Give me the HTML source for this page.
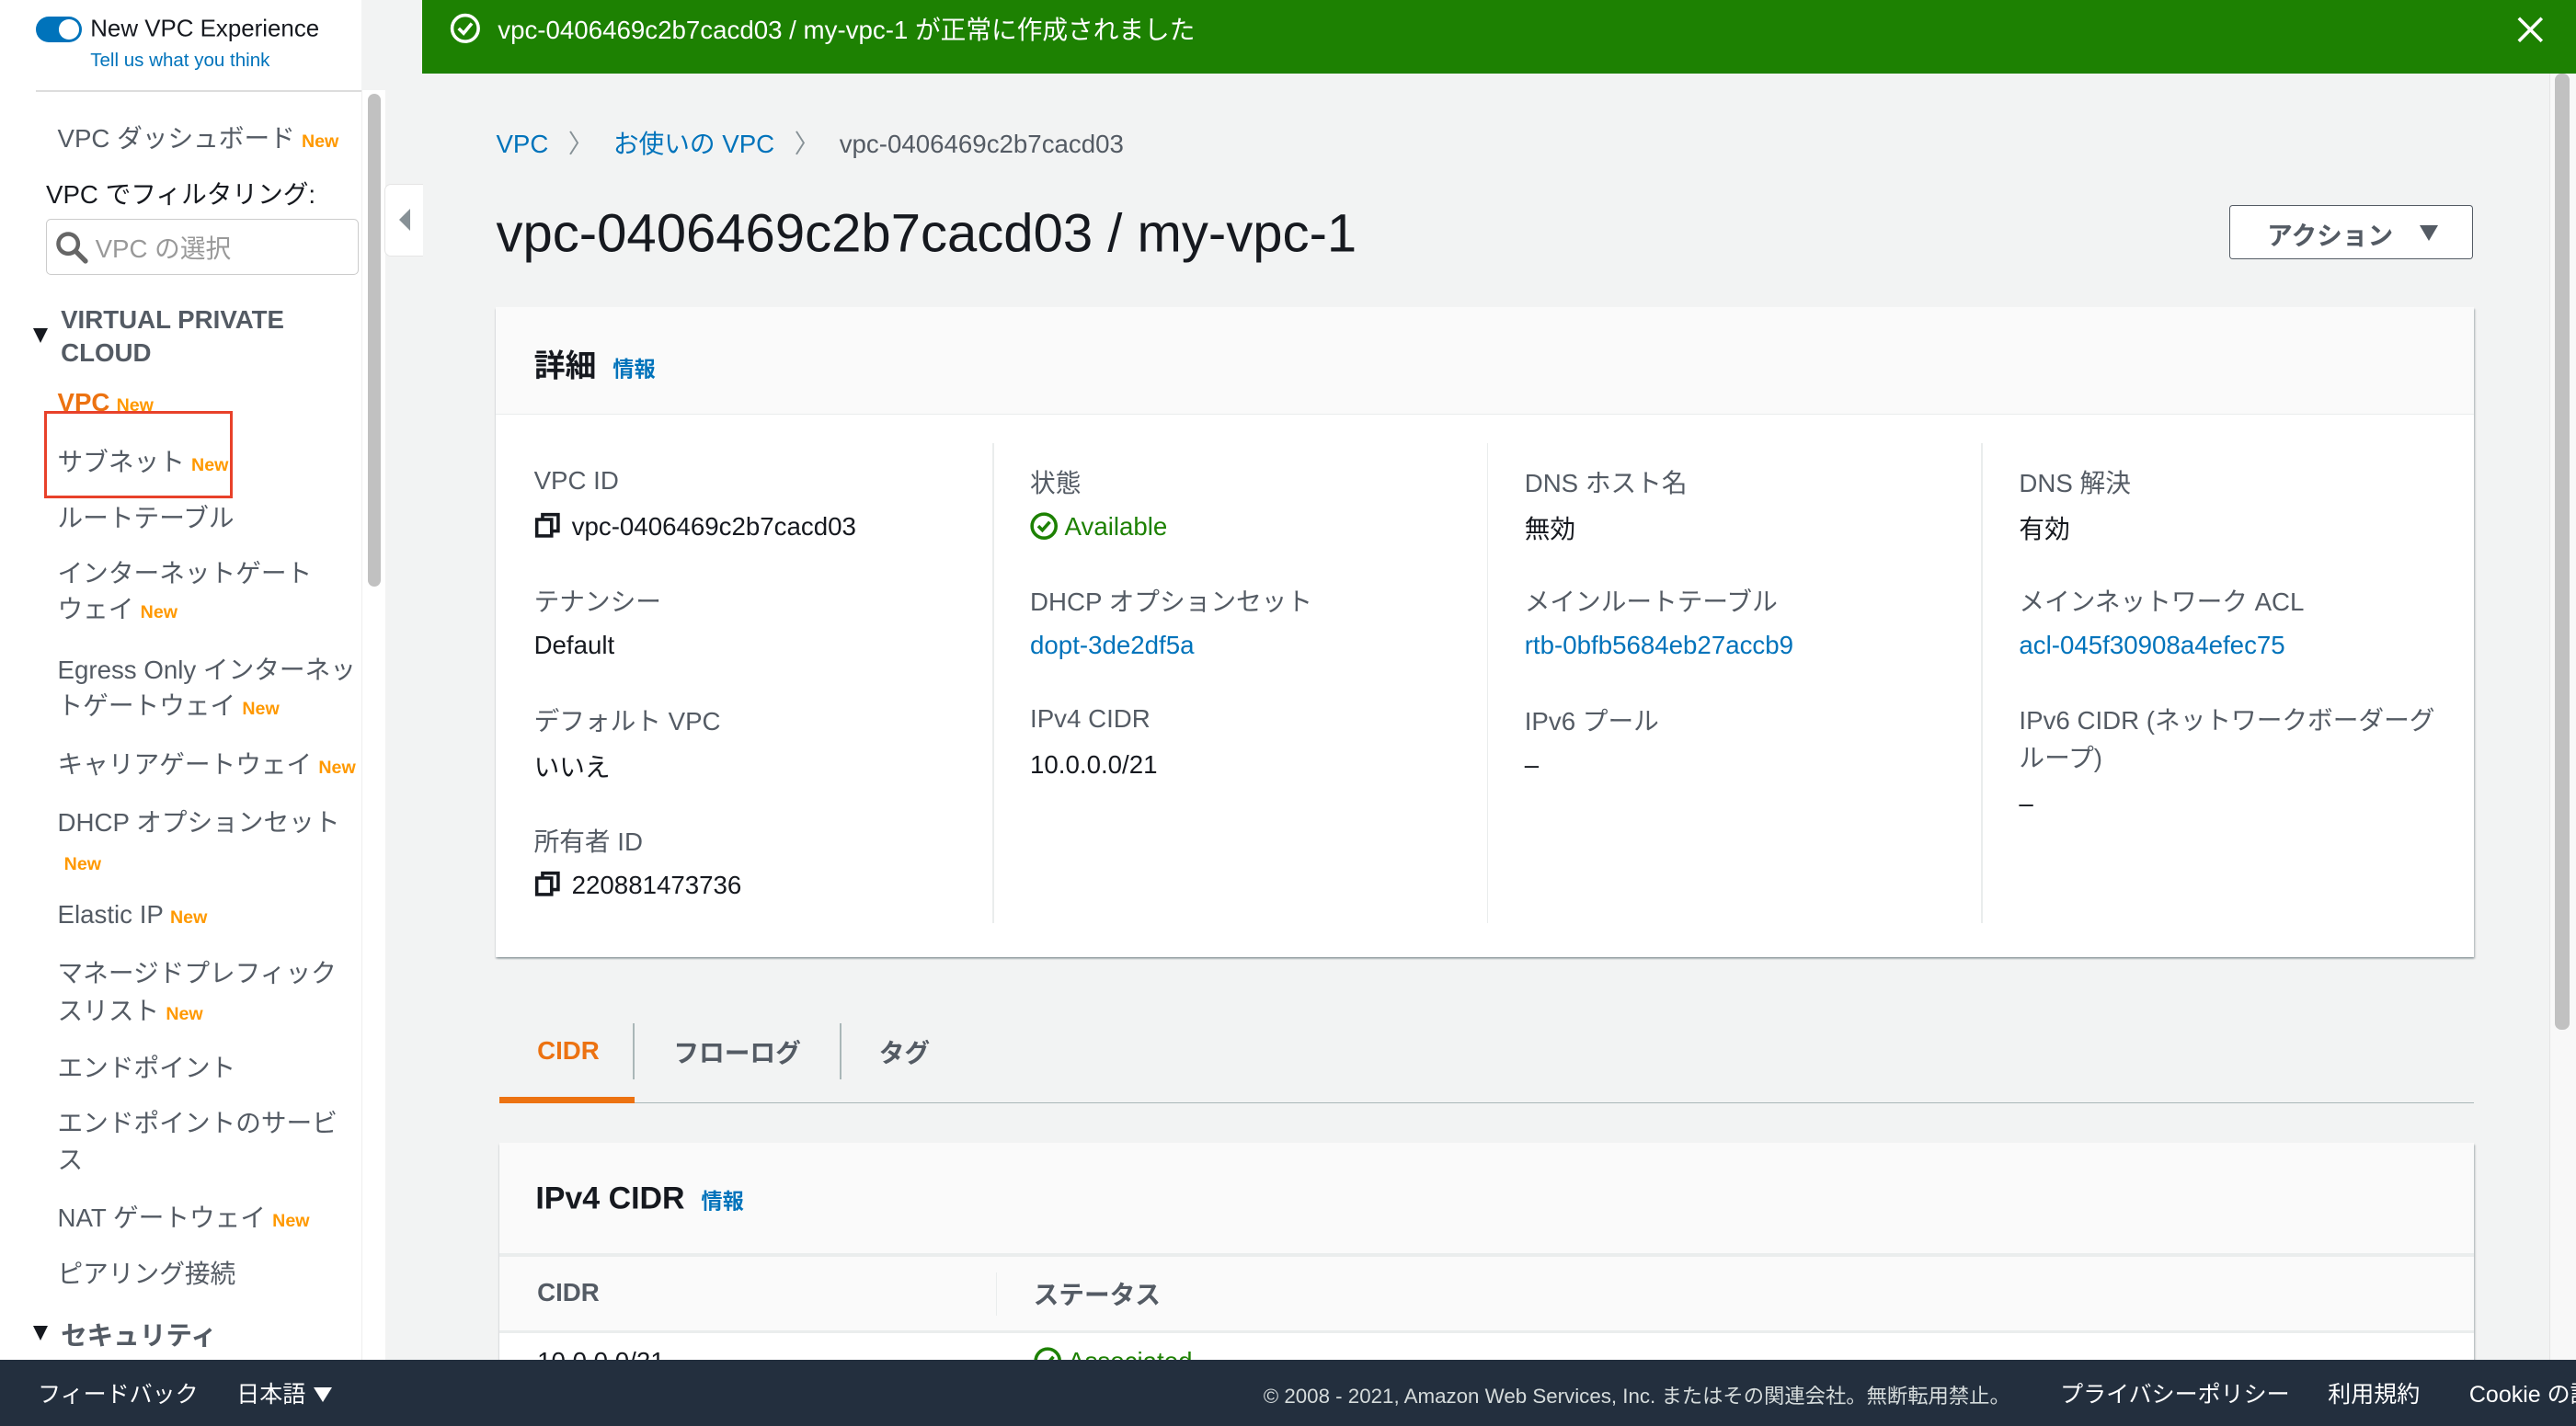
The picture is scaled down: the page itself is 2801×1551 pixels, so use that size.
<!DOCTYPE html>
<html><head><meta charset="utf-8">
<style>
html,body{margin:0;padding:0;width:2801px;height:1551px;overflow:hidden;background:#f2f3f3}
#r{zoom:1.78635;position:relative;width:1568px;height:868px;font-family:"Liberation Sans","Noto Sans CJK JP",sans-serif;color:#16191f}
.a{position:absolute;white-space:nowrap}
.c{transform:translateY(-50%)}
.nav{font-size:15.5px;color:#545b64}
.new{font-size:11px;color:#ff9900;font-weight:bold;margin-left:4px}
.lbl{font-size:15.5px;color:#545b64}
.val{font-size:15.5px;color:#16191f}
.lnk{color:#0073bb}
.div{position:absolute;width:1px;background:#eaeded;top:270px;height:292px}
</style></head><body><div id="r">
<div class="a" style="left:0;top:0;width:220px;height:828px;background:#fff"></div>
<div class="a" style="left:22px;top:55px;width:198px;height:1px;background:#ddd"></div>
<div class="a" style="left:22px;top:10px;width:28px;height:16px;border-radius:8px;background:#0073bb"></div>
<div class="a" style="left:36px;top:12px;width:12px;height:12px;border-radius:6px;background:#fff"></div>
<div class="a c" style="left:55px;top:18px;font-size:14.5px;color:#16191f">New VPC Experience</div>
<div class="a c" style="left:55px;top:37px;font-size:11.5px;color:#0073bb">Tell us what you think</div>
<div class="a" style="left:220px;top:55px;width:14px;height:773px;background:#fff;border-left:1px solid #eee"></div>
<div class="a" style="left:224px;top:57px;width:8px;height:300px;border-radius:4px;background:#c1c1c1"></div>
<div class="a" style="left:234px;top:112px;width:23px;height:43px;background:#fff;border:1px solid #e5e5e5;border-right:none;border-radius:4px 0 0 4px"></div>
<div class="a" style="left:243px;top:127px;width:0;height:0;border-top:7px solid transparent;border-bottom:7px solid transparent;border-right:7px solid #879196"></div>

<div class="a c nav" style="left:35px;top:83px">VPC ダッシュボード<span class="new">New</span></div>
<div class="a c" style="left:28px;top:117px;font-size:15.5px;color:#16191f">VPC でフィルタリング:</div>
<div class="a" style="left:28px;top:133px;width:189px;height:33px;border:1px solid #ccc;border-radius:3px;background:#fff"></div>
<svg class="a" style="left:33px;top:140px" width="22" height="22" viewBox="0 0 22 22"><circle cx="8.5" cy="8.5" r="6" fill="none" stroke="#666" stroke-width="2.5"/><path d="M13 13l6 6" stroke="#666" stroke-width="3" stroke-linecap="round"/></svg>
<div class="a c" style="left:58px;top:150px;font-size:15.5px;color:#999">VPC の選択</div>
<div class="a" style="left:20px;top:200px;width:0;height:0;border-left:5px solid transparent;border-right:5px solid transparent;border-top:9px solid #16191f"></div>
<div class="a" style="left:37px;top:185px;font-size:15.5px;font-weight:bold;color:#545b64;line-height:20px">VIRTUAL PRIVATE<br>CLOUD</div>
<div class="a c" style="left:35px;top:245px;font-size:15.5px;font-weight:bold;color:#ec7211">VPC<span class="new">New</span></div>
<div class="a" style="left:27px;top:250px;width:111px;height:50px;border:2px solid #e8412a;background:#fff"></div>
<div class="a c nav" style="left:35px;top:280px">サブネット<span class="new">New</span></div>
<div class="a c nav" style="left:35px;top:314px">ルートテーブル</div>
<div class="a nav" style="left:35px;top:338px;line-height:22px">インターネットゲート<br>ウェイ<span class="new">New</span></div>
<div class="a nav" style="left:35px;top:397px;line-height:22px">Egress Only インターネッ<br>トゲートウェイ<span class="new">New</span></div>
<div class="a c nav" style="left:35px;top:464px">キャリアゲートウェイ<span class="new">New</span></div>
<div class="a nav" style="left:35px;top:489px;line-height:24px">DHCP オプションセット<br><span class="new" style="margin-left:4px">New</span></div>
<div class="a c nav" style="left:35px;top:557px">Elastic IP<span class="new">New</span></div>
<div class="a nav" style="left:35px;top:581px;line-height:23px">マネージドプレフィック<br>スリスト<span class="new">New</span></div>
<div class="a c nav" style="left:35px;top:649px">エンドポイント</div>
<div class="a nav" style="left:35px;top:673px;line-height:22px">エンドポイントのサービ<br>ス</div>
<div class="a c nav" style="left:35px;top:740px">NAT ゲートウェイ<span class="new">New</span></div>
<div class="a c nav" style="left:35px;top:774px">ピアリング接続</div>
<div class="a" style="left:20px;top:807px;width:0;height:0;border-left:5px solid transparent;border-right:5px solid transparent;border-top:9px solid #16191f"></div>
<div class="a c" style="left:37px;top:812px;font-size:16px;font-weight:bold;color:#545b64">セキュリティ</div>

<div class="a" style="left:257px;top:0;width:1311px;height:45px;background:#1d8102"></div>
<svg class="a" style="left:273px;top:7px" width="20" height="20" viewBox="0 0 20 20"><circle cx="10" cy="10" r="8" fill="none" stroke="#fff" stroke-width="2"/><path d="M6 10l3 3 5-6" fill="none" stroke="#fff" stroke-width="2"/></svg>
<div class="a c" style="left:303px;top:17px;font-size:15.5px;color:#fff">vpc-0406469c2b7cacd03 / my-vpc-1 が正常に作成されました</div>
<svg class="a" style="left:1532px;top:10px" width="16" height="16" viewBox="0 0 16 16"><path d="M1 1l14 14M15 1L1 15" stroke="#fff" stroke-width="2"/></svg>
<div class="a" style="left:1552px;top:45px;width:16px;height:783px;background:#f8f8f8;border-left:1px solid #e5e5e5"></div>
<div class="a" style="left:1555px;top:45px;width:9px;height:582px;background:#c1c1c1;border-radius:4px"></div>

<div class="a c" style="left:302px;top:86px;font-size:15.5px"><span class="lnk">VPC</span><span style="color:#879196;margin:0 12px">〉</span><span class="lnk">お使いの VPC</span><span style="color:#879196;margin:0 12px">〉</span><span style="color:#545b64">vpc-0406469c2b7cacd03</span></div>
<div class="a c" style="left:302px;top:142px;font-size:32.5px;color:#16191f">vpc-0406469c2b7cacd03 / my-vpc-1</div>
<div class="a" style="left:1357px;top:125px;width:147px;height:32px;border:1px solid #545b64;border-radius:2px;background:#fff"></div>
<div class="a c" style="left:1380px;top:142px;font-size:15.5px;font-weight:bold;color:#545b64">アクション</div>
<div class="a" style="left:1473px;top:137px;width:0;height:0;border-left:6px solid transparent;border-right:6px solid transparent;border-top:10px solid #545b64"></div>

<div class="a" style="left:302px;top:187px;width:1204px;height:396px;background:#fff;box-shadow:0 1px 1px rgba(0,28,36,.3),1px 1px 1px rgba(0,28,36,.15)"></div>
<div class="a" style="left:302px;top:187px;width:1204px;height:65px;background:#fafafa;border-bottom:1px solid #eaeded"></div>
<div class="a c" style="left:325px;top:221px;font-size:19px;font-weight:bold">詳細<span style="font-size:13px;color:#0073bb;margin-left:10px">情報</span></div>
<div class="div" style="left:604px"></div><div class="div" style="left:905px"></div><div class="div" style="left:1206px"></div>
<svg width="0" height="0" style="position:absolute"><defs><symbol id="cp" viewBox="0 0 16 16"><rect x="1.5" y="4.5" width="9" height="10" fill="none" stroke="#16191f" stroke-width="2"/><path d="M5 4V1.5h9.5v10H11" fill="none" stroke="#16191f" stroke-width="2"/></symbol></defs></svg>

<div class="a c lbl" style="left:325px;top:293px">VPC ID</div>
<div class="a c val" style="left:325px;top:321px"><svg width="16" height="16" style="vertical-align:-2px;margin-right:7px"><use href="#cp"/></svg>vpc-0406469c2b7cacd03</div>
<div class="a c lbl" style="left:325px;top:365px">テナンシー</div>
<div class="a c val" style="left:325px;top:393px">Default</div>
<div class="a c lbl" style="left:325px;top:438px">デフォルト VPC</div>
<div class="a c val" style="left:325px;top:466px">いいえ</div>
<div class="a c lbl" style="left:325px;top:511px">所有者 ID</div>
<div class="a c val" style="left:325px;top:539px"><svg width="16" height="16" style="vertical-align:-2px;margin-right:7px"><use href="#cp"/></svg>220881473736</div>

<div class="a c lbl" style="left:627px;top:293px">状態</div>
<div class="a c val" style="left:627px;top:321px;color:#1d8102"><svg width="17" height="17" viewBox="0 0 17 17" style="vertical-align:-3px;margin-right:4px"><circle cx="8.5" cy="8.5" r="7.3" fill="none" stroke="#1d8102" stroke-width="2"/><path d="M5 8.5l2.5 2.5 4.5-5" fill="none" stroke="#1d8102" stroke-width="2"/></svg>Available</div>
<div class="a c lbl" style="left:627px;top:365px">DHCP オプションセット</div>
<div class="a c val lnk" style="left:627px;top:393px">dopt-3de2df5a</div>
<div class="a c lbl" style="left:627px;top:438px">IPv4 CIDR</div>
<div class="a c val" style="left:627px;top:466px">10.0.0.0/21</div>

<div class="a c lbl" style="left:928px;top:293px">DNS ホスト名</div>
<div class="a c val" style="left:928px;top:321px">無効</div>
<div class="a c lbl" style="left:928px;top:365px">メインルートテーブル</div>
<div class="a c val lnk" style="left:928px;top:393px">rtb-0bfb5684eb27accb9</div>
<div class="a c lbl" style="left:928px;top:438px">IPv6 プール</div>
<div class="a c val" style="left:928px;top:466px">–</div>

<div class="a c lbl" style="left:1229px;top:293px">DNS 解決</div>
<div class="a c val" style="left:1229px;top:321px">有効</div>
<div class="a c lbl" style="left:1229px;top:365px">メインネットワーク ACL</div>
<div class="a c val lnk" style="left:1229px;top:393px">acl-045f30908a4efec75</div>
<div class="a lbl" style="left:1229px;top:427px;line-height:23px">IPv6 CIDR (ネットワークボーダーグ<br>ループ)</div>
<div class="a c val" style="left:1229px;top:489px">–</div>

<div class="a" style="left:304px;top:671px;width:1202px;height:1px;background:#aab7b8"></div>
<div class="a" style="left:304px;top:668px;width:82px;height:4px;background:#ec7211"></div>
<div class="a c" style="left:327px;top:640px;font-size:15.5px;font-weight:bold;color:#ec7211">CIDR</div>
<div class="a" style="left:385px;top:623px;width:1px;height:34px;background:#aab7b8"></div>
<div class="a c" style="left:410px;top:640px;font-size:15.5px;font-weight:bold;color:#545b64">フローログ</div>
<div class="a" style="left:511px;top:623px;width:1px;height:34px;background:#aab7b8"></div>
<div class="a c" style="left:535px;top:640px;font-size:15.5px;font-weight:bold;color:#545b64">タグ</div>

<div class="a" style="left:304px;top:696px;width:1202px;height:140px;background:#fafafa;box-shadow:0 1px 1px rgba(0,28,36,.3),1px 1px 1px rgba(0,28,36,.15)"></div>
<div class="a c" style="left:326px;top:730px;font-size:19px;font-weight:bold">IPv4 CIDR<span style="font-size:13px;color:#0073bb;margin-left:10px">情報</span></div>
<div class="a" style="left:304px;top:763px;width:1202px;height:2px;background:#eaeded"></div>
<div class="a" style="left:606px;top:775px;width:1px;height:26px;background:#eaeded"></div>
<div class="a c" style="left:327px;top:787px;font-size:15.5px;font-weight:bold;color:#545b64">CIDR</div>
<div class="a c" style="left:629px;top:787px;font-size:15.5px;font-weight:bold;color:#545b64">ステータス</div>
<div class="a" style="left:304px;top:810px;width:1202px;height:30px;background:#fff;border-top:2px solid #eaeded"></div>
<div class="a" style="left:327px;top:820px;font-size:15.5px">10.0.0.0/21</div>
<div class="a" style="left:629px;top:820px;font-size:15.5px;color:#1d8102"><svg width="17" height="17" viewBox="0 0 17 17" style="vertical-align:-3px;margin-right:4px"><circle cx="8.5" cy="8.5" r="7.3" fill="none" stroke="#1d8102" stroke-width="2"/><path d="M5 8.5l2.5 2.5 4.5-5" fill="none" stroke="#1d8102" stroke-width="2"/></svg>Associated</div>

<div class="a" style="left:0;top:828px;width:1568px;height:40px;background:#232f3e"></div>
<div class="a c" style="left:23px;top:848px;font-size:14px;color:#fff">フィードバック</div>
<div class="a c" style="left:144px;top:848px;font-size:14px;color:#fff">日本語</div>
<div class="a" style="left:191px;top:845px;width:0;height:0;border-left:6px solid transparent;border-right:6px solid transparent;border-top:9px solid #fff"></div>
<div class="a c" style="left:769px;top:849px;font-size:12.5px;color:#d5dbdb">© 2008 - 2021, Amazon Web Services, Inc. またはその関連会社。無断転用禁止。</div>
<div class="a c" style="left:1254px;top:848px;font-size:14px;color:#fff">プライバシーポリシー</div>
<div class="a c" style="left:1417px;top:848px;font-size:14px;color:#fff">利用規約</div>
<div class="a c" style="left:1503px;top:848px;font-size:14px;color:#fff">Cookie の設定</div>
</div></body></html>
